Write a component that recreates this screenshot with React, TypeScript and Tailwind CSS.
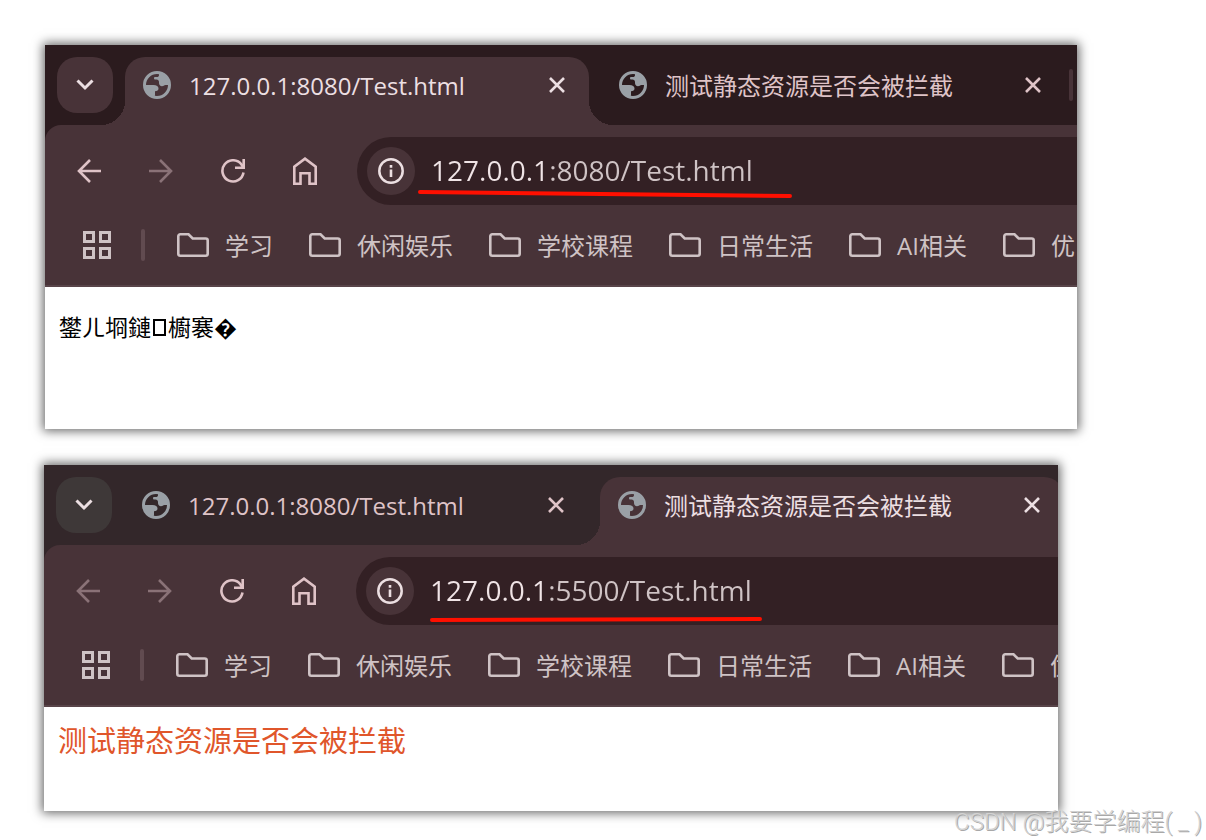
import type { ReactNode } from "react";

type Tab = { title: string; active?: boolean };

type BrowserWindowProps = {
  label: string;
  tabs: Tab[];
  url: string;
  variant: "dark" | "muted";
  canGoBack?: boolean;
  underline: ReactNode;
  className: string;
  children: ReactNode;
};

const BOOKMARKS = ["学习", "休闲娱乐", "学校课程", "日常生活", "AI相关", "优"];

const VARIANTS = {
  dark: { strip: "bg-[#2b1b1e]", menu: "bg-[#483338]" },
  muted: { strip: "bg-[#33272a]", menu: "bg-[#3e3838]" },
};

const GlobeIcon = () => (
  <svg width="28" height="28" viewBox="0 0 28 28" className="shrink-0" aria-hidden="true">
    <circle cx="14" cy="14" r="12.5" fill="none" stroke="#9aa0a6" strokeWidth="3" />
    <path
      d="M16 2.500v1.500c0 1.400-.8 2-2.200 2h-1.600c-.8 0-1.200.500-1.200 1.300 0 .8.500 1.200 1.300 1.200h1.200c1.500 0 2.500 1 2.500 2.500v1c0 1.800 1.200 3.300 3 3.300 1.600 0 2-1.300 3.500-1.300H26C26 7.500 22 3 16 2.500z"
      fill="#9aa0a6"
    />
    <path
      d="M2 14h8.500c3 0 5 1.300 5 3.500 0 1.700-1.300 2.700-3.500 2.700v4.300l-1.500 1.500C5.500 24.500 2.500 20 2 14z"
      fill="#9aa0a6"
    />
  </svg>
);

const ChevronIcon = () => (
  <svg width="18" height="12" viewBox="0 0 18 12" fill="none" aria-hidden="true">
    <path d="M1.500 1.500 9 9l7.500-7.500" stroke="currentColor" strokeWidth="3" />
  </svg>
);

const CloseIcon = () => (
  <svg width="16" height="16" viewBox="0 0 16 16" fill="none" aria-hidden="true">
    <path d="m1 1 14 14M15 1 1 15" stroke="currentColor" strokeWidth="2.600" />
  </svg>
);

const ArrowIcon = ({ className = "" }: { className?: string }) => (
  <svg width="24" height="24" viewBox="0 0 24 24" fill="none" className={className} aria-hidden="true">
    <path d="M24 12H2M13 1 2 12l11 11" stroke="currentColor" strokeWidth="2.600" />
  </svg>
);

const ReloadIcon = () => (
  <svg width="24" height="24" viewBox="0 0 24 24" fill="none" aria-hidden="true">
    <path d="M22.500 13.500A10.600 10.600 0 1 1 20.500 5.500L22 8" stroke="currentColor" strokeWidth="2.600" />
    <path d="M22.700 0v8.700H14" stroke="currentColor" strokeWidth="2.600" />
  </svg>
);

const HomeIcon = () => (
  <svg width="24" height="28" viewBox="0 0 24 28" fill="none" aria-hidden="true">
    <path
      d="M1.300 26.700V9.600L12 1.700l10.700 7.900v17.100h-6.200V16.300h-9v10.400z"
      stroke="currentColor"
      strokeWidth="2.600"
    />
  </svg>
);

const InfoIcon = () => (
  <svg width="26" height="26" viewBox="0 0 26 26" fill="none" aria-hidden="true">
    <circle cx="13" cy="13" r="11.700" stroke="currentColor" strokeWidth="2.500" />
    <path d="M13 11.500V19M13 7v2.800" stroke="currentColor" strokeWidth="2.600" />
  </svg>
);

const AppsIcon = () => (
  <svg width="28" height="28" viewBox="0 0 28 28" fill="none" aria-hidden="true">
    <path
      d="M1.500 1.500h9v9h-9zM17.500 1.500h9v9h-9zM1.500 17.500h9v9h-9zM17.500 17.500h9v9h-9z"
      stroke="currentColor"
      strokeWidth="3"
    />
  </svg>
);

const FolderIcon = () => (
  <svg width="32" height="24" viewBox="0 0 32 24" fill="none" className="shrink-0" aria-hidden="true">
    <path
      d="M3.300 1.300h8.200l4.200 4.200h13a2 2 0 0 1 2 2v13.200a2 2 0 0 1-2 2H3.300a2 2 0 0 1-2-2V3.300a2 2 0 0 1 2-2z"
      stroke="currentColor"
      strokeWidth="2.600"
    />
  </svg>
);

const TabItem = ({ tab }: { tab: Tab }) => (
  <div
    className={`relative flex h-[68px] w-[464px] shrink-0 items-start pt-[14px] pr-6 pl-[18px] ${
      tab.active ? "rounded-t-[20px] bg-[#483338] text-[#ecdfe2]" : "text-[#dfc3c7]"
    }`}
  >
    {/* Flared feet of the selected tab */}
    {tab.active && (
      <>
        <span className="absolute bottom-0 -left-6 size-6 bg-[radial-gradient(circle_at_0_0,transparent_24px,#483338_24px)]" />
        <span className="absolute -right-6 bottom-0 size-6 bg-[radial-gradient(circle_at_100%_0,transparent_24px,#483338_24px)]" />
      </>
    )}
    <GlobeIcon />
    <span className="ml-[18px] grow text-2xl leading-[30px] whitespace-nowrap">{tab.title}</span>
    <button type="button" aria-label="关闭标签页" className="flex h-7 items-center">
      <CloseIcon />
    </button>
  </div>
);

const BrowserWindow = ({
  label,
  tabs,
  url,
  variant,
  canGoBack = false,
  underline,
  className,
  children,
}: BrowserWindowProps) => (
  <section
    aria-label={label}
    className={`overflow-hidden bg-white shadow-[0_0_10px_2px_rgba(0,0,0,0.6)] ${className}`}
  >
    <div className={VARIANTS[variant].strip}>
      {/* Tab strip */}
      <div className="flex gap-3 pt-3 pl-3">
        <button
          type="button"
          aria-label="搜索标签页"
          className={`flex size-14 shrink-0 items-center justify-center rounded-[20px] text-[#ecdfe2] ${VARIANTS[variant].menu}`}
        >
          <ChevronIcon />
        </button>
        {tabs.map((tab) => (
          <TabItem key={tab.title} tab={tab} />
        ))}
        {!tabs[tabs.length - 1].active && (
          <span className="mt-3 -ml-2 h-8 w-1 shrink-0 rounded-full bg-[#483338]" />
        )}
      </div>

      {/* Toolbar and bookmarks */}
      <div className="rounded-tl-2xl border-b-2 border-[#584449] bg-[#483338] pt-3">
        <div className="flex h-[68px] items-center pl-8 text-[#dfc3c7]">
          <div className="flex shrink-0 items-center gap-12">
            <button
              type="button"
              aria-label="后退"
              disabled={!canGoBack}
              className="disabled:text-[#8a7277]"
            >
              <ArrowIcon />
            </button>
            <button type="button" aria-label="前进" disabled className="disabled:text-[#8a7277]">
              <ArrowIcon className="rotate-180" />
            </button>
            <button type="button" aria-label="重新加载">
              <ReloadIcon />
            </button>
            <button type="button" aria-label="主页">
              <HomeIcon />
            </button>
          </div>
          <div className="relative ml-10 flex h-full grow items-center rounded-l-full bg-[#332024] pl-[10px]">
            <button
              type="button"
              aria-label="查看网站信息"
              className="flex size-12 shrink-0 items-center justify-center rounded-full bg-[#483338] text-[#ecdfe2]"
            >
              <InfoIcon />
            </button>
            {/* Host part is brighter than the rest of the address */}
            <input
              type="text"
              aria-label="地址栏"
              defaultValue={url}
              className="ml-4 h-12 min-w-0 grow bg-[linear-gradient(to_right,#f0e4e6_118px,#cfc3c5_118px)] bg-clip-text pb-0.5 text-[28px] text-transparent outline-none"
            />
            {underline}
          </div>
        </div>

        <nav aria-label="书签栏" className="flex h-20 items-center pl-[38px] text-[#cfc3c5]">
          <button type="button" aria-label="应用" className="shrink-0">
            <AppsIcon />
          </button>
          <span className="mr-8 ml-[30px] h-8 w-1 shrink-0 rounded-full bg-[#614b50]" />
          <div className="flex gap-9">
            {BOOKMARKS.map((name) => (
              <a
                key={name}
                href="#"
                className="flex shrink-0 items-center gap-4 text-2xl whitespace-nowrap"
              >
                <FolderIcon />
                <span className="pt-0.5">{name}</span>
              </a>
            ))}
          </div>
        </nav>
      </div>
    </div>
    {children}
  </section>
);

export default function App() {
  return (
    <main className="relative flex min-h-screen flex-col gap-9 bg-white pt-[45px] font-['Open_Sans','Noto_Sans_CJK_SC',sans-serif]">
      <BrowserWindow
        label="127.0.0.1:8080"
        tabs={[
          { title: "127.0.0.1:8080/Test.html", active: true },
          { title: "测试静态资源是否会被拦截" },
        ]}
        url="127.0.0.1:8080/Test.html"
        variant="dark"
        canGoBack
        className="mr-[129px] ml-[45px]"
        underline={
          <svg
            width="376"
            height="10"
            viewBox="0 0 376 10"
            className="absolute top-[52px] left-[60px]"
            aria-hidden="true"
          >
            <path d="M3 3 373 7" stroke="#ff0f00" strokeWidth="4" strokeLinecap="round" />
          </svg>
        }
      >
        <p className="px-[14px] pt-6 pb-[86px] text-[23px] leading-8 text-black">
          鐢ㄦ埛鏈
          <span className="mx-0.5 inline-block h-[17px] w-[13px] border-2 border-black" />
          櫥褰{"\ufffd"}
        </p>
      </BrowserWindow>

      <BrowserWindow
        label="127.0.0.1:5500"
        tabs={[
          { title: "127.0.0.1:8080/Test.html" },
          { title: "测试静态资源是否会被拦截", active: true },
        ]}
        url="127.0.0.1:5500/Test.html"
        variant="muted"
        className="mr-[148px] ml-[44px]"
        underline={
          <svg
            width="336"
            height="8"
            viewBox="0 0 336 8"
            className="absolute top-[58px] left-[72px]"
            aria-hidden="true"
          >
            <path d="M4 5 332 4" stroke="#ff0f00" strokeWidth="4" strokeLinecap="round" />
          </svg>
        }
      >
        <p className="px-[14px] pt-[14px] pb-[50px] text-[29px] leading-10 text-[#e0562b]">
          测试静态资源是否会被拦截
        </p>
      </BrowserWindow>

      <p className="absolute right-1 bottom-0 font-['Roboto','Noto_Sans_CJK_SC',sans-serif] text-2xl leading-9 font-light text-[#d2d2d2] [text-shadow:1px_1px_0_#a8a8a8]">
        CSDN @我要学编程( _ )
      </p>
    </main>
  );
}
